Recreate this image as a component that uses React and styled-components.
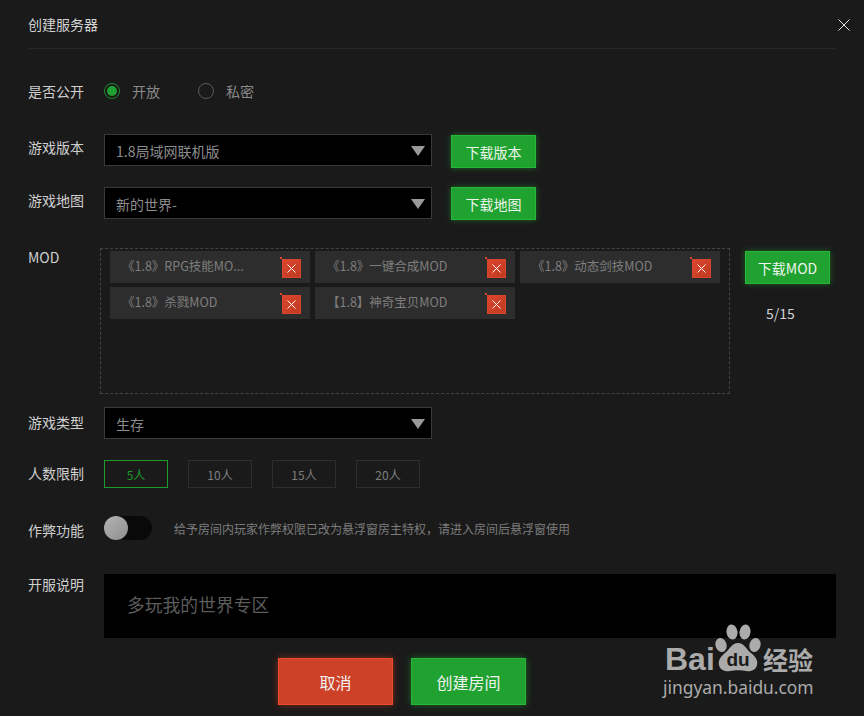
import React from "react";
import styled, { createGlobalStyle } from "styled-components";

const mods = [
  "《1.8》RPG技能MO...",
  "《1.8》一键合成MOD",
  "《1.8》动态剑技MOD",
  "《1.8》杀戮MOD",
  "【1.8】神奇宝贝MOD",
];
const limits = ["5人", "10人", "15人", "20人"];

const CloseIcon = () => (
  <svg width="12" height="12" viewBox="0 0 12 12">
    <path d="M0.5 0.5L11.5 11.5M11.5 0.5L0.5 11.5" stroke="#e6e6e6" strokeWidth="1" fill="none" />
  </svg>
);

const SmallX = () => (
  <svg width="9" height="9" viewBox="0 0 9 9">
    <path d="M0.5 0.5L8.5 8.5M8.5 0.5L0.5 8.5" stroke="#fff" strokeWidth="1" fill="none" />
  </svg>
);

const Paw = () => (
  <svg width="46" height="49" viewBox="0 0 46 49">
    <ellipse cx="6" cy="21" rx="5.5" ry="7" transform="rotate(-18 6 21)" fill="#ababab" />
    <ellipse cx="17" cy="8" rx="5.5" ry="7.5" transform="rotate(-8 17 8)" fill="#ababab" />
    <ellipse cx="30" cy="8" rx="5.5" ry="7.5" transform="rotate(8 30 8)" fill="#ababab" />
    <ellipse cx="40" cy="21" rx="5.5" ry="7" transform="rotate(18 40 21)" fill="#ababab" />
    <path
      d="M23 19C17 19 15 25 10 29C5 33 3 37 4 41C5 46 10 48 15 47C19 46 27 46 31 47C36 48 41 46 42 41C43 37 41 33 36 29C31 25 29 19 23 19Z"
      fill="#ababab"
    />
    <text x="23" y="42" textAnchor="middle" fontFamily="'Liberation Sans', sans-serif" fontWeight="700" fontSize="19" fill="#1a1a1a">
      du
    </text>
  </svg>
);

const App = () => (
  <Page>
    <GlobalStyle />
    <Header>
      <Title>创建服务器</Title>
      <CloseButton>
        <CloseIcon />
      </CloseButton>
    </Header>

    <RadioRow>
      <Label>是否公开</Label>
      <RadioOption $on>
        <RadioMark $on />
        开放
      </RadioOption>
      <RadioOption>
        <RadioMark />
        私密
      </RadioOption>
    </RadioRow>

    <FieldRow $top={33}>
      <Label>游戏版本</Label>
      <Select>
        <span>1.8局域网联机版</span>
        <Arrow />
      </Select>
      <GreenButton $nudge={1}>下载版本</GreenButton>
    </FieldRow>

    <FieldRow $top={21}>
      <Label>游戏地图</Label>
      <Select>
        <span>新的世界-</span>
        <Arrow />
      </Select>
      <GreenButton>下载地图</GreenButton>
    </FieldRow>

    <ModRow>
      <ModLabel>MOD</ModLabel>
      <ModBox>
        {mods.map((mod) => (
          <ModChip key={mod}>
            <ModName>{mod}</ModName>
            <RemoveBadge>
              <SmallX />
            </RemoveBadge>
          </ModChip>
        ))}
      </ModBox>
      <ModSide>
        <GreenButton>下载MOD</GreenButton>
        <ModCount>5/15</ModCount>
      </ModSide>
    </ModRow>

    <FieldRow $top={13}>
      <Label $shift={2}>游戏类型</Label>
      <Select>
        <span>生存</span>
        <Arrow />
      </Select>
    </FieldRow>

    <LimitRow>
      <Label $shift={-1}>人数限制</Label>
      {limits.map((limit, index) => (
        <LimitButton key={limit} $active={index === 0}>
          {limit}
        </LimitButton>
      ))}
    </LimitRow>

    <ToggleRow>
      <Label $shift={2}>作弊功能</Label>
      <ToggleTrack>
        <ToggleThumb />
      </ToggleTrack>
      <Hint>给予房间内玩家作弊权限已改为悬浮窗房主特权，请进入房间后悬浮窗使用</Hint>
    </ToggleRow>

    <IntroRow>
      <IntroLabel>开服说明</IntroLabel>
      <IntroBox>多玩我的世界专区</IntroBox>
    </IntroRow>

    <ActionRow>
      <ActionButton $red>取消</ActionButton>
      <ActionButton>创建房间</ActionButton>
    </ActionRow>

    <Watermark>
      <LogoLine>
        <BaiText>Bai</BaiText>
        <Paw />
        <JingyanText>经验</JingyanText>
      </LogoLine>
      <SiteText>jingyan.baidu.com</SiteText>
    </Watermark>
  </Page>
);

export default App;

const GlobalStyle = createGlobalStyle`
  html, body {
    margin: 0;
    padding: 0;
    background: #1a1a1a;
  }
  * {
    box-sizing: border-box;
  }
`;

const Page = styled.div`
  position: relative;
  width: 864px;
  height: 716px;
  padding: 0 28px;
  overflow: hidden;
  background: #1a1a1a;
  color: #c8c8c8;
  font-family: "Noto Sans CJK SC", "Liberation Sans", sans-serif;
  font-size: 14px;
`;

const Header = styled.div`
  display: flex;
  align-items: center;
  justify-content: space-between;
  height: 49px;
  border-bottom: 1px solid #262626;
`;

const Title = styled.div`
  color: #d4d4d4;
  font-size: 14px;
`;

const CloseButton = styled.div`
  display: flex;
  margin-right: -14px;
  margin-top: 1px;
`;

const Label = styled.div`
  flex: none;
  width: 76px;
  color: #cfcfcf;
  font-size: 14px;
  transform: translateY(${(p) => p.$shift || 0}px);
`;

const RadioRow = styled.div`
  display: flex;
  align-items: center;
  height: 20px;
  margin-top: 32px;
`;

const RadioOption = styled.div`
  display: flex;
  align-items: center;
  gap: 12px;
  width: 94px;
  color: #8a8a8a;
  font-size: 14px;
`;

const RadioMark = styled.div`
  display: flex;
  align-items: center;
  justify-content: center;
  width: 16px;
  height: 16px;
  border-radius: 50%;
  border: 1px solid ${(p) => (p.$on ? "#1f8a2c" : "#5a5a5a")};

  &::after {
    content: "";
    display: ${(p) => (p.$on ? "block" : "none")};
    width: 10px;
    height: 10px;
    border-radius: 50%;
    background: #1fa22f;
  }
`;

const FieldRow = styled.div`
  display: flex;
  align-items: flex-start;
  height: 32px;
  margin-top: ${(p) => p.$top}px;

  ${Label} {
    line-height: 26px;
  }
`;

const Select = styled.div`
  display: flex;
  align-items: center;
  justify-content: space-between;
  width: 328px;
  height: 32px;
  padding: 1px 6px 0 11px;
  background: #000;
  border: 1px solid #3a3a3a;
  color: #8c8c8c;
  font-size: 14px;
`;

const Arrow = styled.div`
  width: 0;
  height: 0;
  border-left: 7px solid transparent;
  border-right: 7px solid transparent;
  border-top: 10px solid #999;
`;

const GreenButton = styled.div`
  display: flex;
  align-items: center;
  justify-content: center;
  flex: none;
  width: 85px;
  height: 33px;
  margin-left: 19px;
  margin-top: ${(p) => p.$nudge || 0}px;
  background: #1fa22f;
  border: 1px solid #27b838;
  box-shadow: 0 0 6px rgba(40, 190, 60, 0.45);
  color: #eef5ee;
  font-size: 14px;
`;

const ModRow = styled.div`
  display: flex;
  align-items: flex-start;
  margin-top: 29px;
`;

const ModLabel = styled.div`
  flex: none;
  width: 72px;
  color: #cfcfcf;
  font-size: 14px;
  line-height: 18px;
`;

const ModBox = styled.div`
  display: grid;
  grid-template-columns: repeat(3, 200px);
  grid-auto-rows: 32px;
  align-content: start;
  gap: 4px 5px;
  width: 630px;
  height: 146px;
  padding: 2px 0 0 9px;
  border: 1px dashed #444;
`;

const ModChip = styled.div`
  display: flex;
  justify-content: space-between;
  height: 32px;
  padding: 0 9px 0 12px;
  background: #2d2d2d;
`;

const ModName = styled.div`
  color: #7e7e7e;
  font-size: 12.5px;
  line-height: 30px;
`;

const RemoveBadge = styled.div`
  position: relative;
  display: flex;
  align-items: center;
  justify-content: center;
  width: 19px;
  height: 19px;
  margin-top: 8px;
  background: linear-gradient(135deg, #dc452d, #bf3b22);
  border: 1px solid #d8452d;

  &::before {
    content: "";
    position: absolute;
    left: -3px;
    top: -3px;
    width: 2px;
    height: 2px;
    background: #e0442c;
    box-shadow: 2px 4px 0 #e0442c;
  }
`;

const ModSide = styled.div`
  display: flex;
  flex-direction: column;
  align-items: center;
  margin-left: 15px;
  padding-top: 3px;

  ${GreenButton} {
    margin-left: 0;
  }
`;

const ModCount = styled.div`
  margin-top: 19px;
  margin-right: 14px;
  color: #d0d0d0;
  font-size: 14px;
`;

const LimitRow = styled.div`
  display: flex;
  align-items: center;
  gap: 20px;
  margin-top: 21px;

  ${Label} {
    margin-right: -20px;
  }
`;

const LimitButton = styled.div`
  display: flex;
  align-items: center;
  justify-content: center;
  width: 64px;
  height: 28px;
  border: 1px solid ${(p) => (p.$active ? "#1f9a2d" : "#2e2e2e")};
  color: ${(p) => (p.$active ? "#1f9a2d" : "#7e7e7e")};
  font-size: 12px;
`;

const ToggleRow = styled.div`
  display: flex;
  align-items: center;
  margin-top: 28px;
`;

const ToggleTrack = styled.div`
  flex: none;
  width: 48px;
  height: 24px;
  border-radius: 12px;
  background: #090909;
`;

const ToggleThumb = styled.div`
  width: 24px;
  height: 24px;
  border-radius: 50%;
  background: linear-gradient(135deg, #b4b4b4, #8e8e8e);
`;

const Hint = styled.div`
  margin-left: 22px;
  color: #7c7c7c;
  font-size: 12px;
  white-space: nowrap;
`;

const IntroRow = styled.div`
  display: flex;
  align-items: flex-start;
  margin-top: 34px;
`;

const IntroLabel = styled(Label)`
  line-height: 20px;
`;

const IntroBox = styled.div`
  width: 732px;
  height: 64px;
  padding: 18px 22px 0 23px;
  background: #000;
  color: #5c5c5c;
  font-size: 17.8px;
  line-height: 24px;
`;

const ActionRow = styled.div`
  display: flex;
  gap: 18px;
  margin-top: 20px;
  margin-left: 250px;
`;

const ActionButton = styled.div`
  display: flex;
  align-items: center;
  justify-content: center;
  width: 115px;
  height: 47px;
  background: ${(p) => (p.$red ? "#cc4127" : "#1fa22f")};
  border: 1px solid ${(p) => (p.$red ? "#ee4a2b" : "#27b838")};
  box-shadow: 0 0 7px ${(p) => (p.$red ? "rgba(238, 74, 43, 0.45)" : "rgba(40, 190, 60, 0.45)")};
  color: #f2f2f2;
  font-size: 16px;
`;

const Watermark = styled.div`
  position: absolute;
  left: 663px;
  top: 624px;
  width: 154px;
  color: #ababab;
`;

const LogoLine = styled.div`
  display: flex;
  align-items: flex-end;
  height: 49px;
`;

const BaiText = styled.div`
  width: 50px;
  margin-left: 2px;
  margin-bottom: -4px;
  font-family: "Liberation Sans", sans-serif;
  font-weight: 700;
  font-size: 32px;
  line-height: 36px;
`;

const JingyanText = styled.div`
  margin-left: 2px;
  margin-bottom: -3px;
  font-weight: 700;
  font-size: 25px;
  line-height: 34px;
  white-space: nowrap;
`;

const SiteText = styled.div`
  margin-top: 2px;
  font-family: "Noto Sans", sans-serif;
  font-size: 17.4px;
  line-height: 24px;
  white-space: nowrap;
`;
